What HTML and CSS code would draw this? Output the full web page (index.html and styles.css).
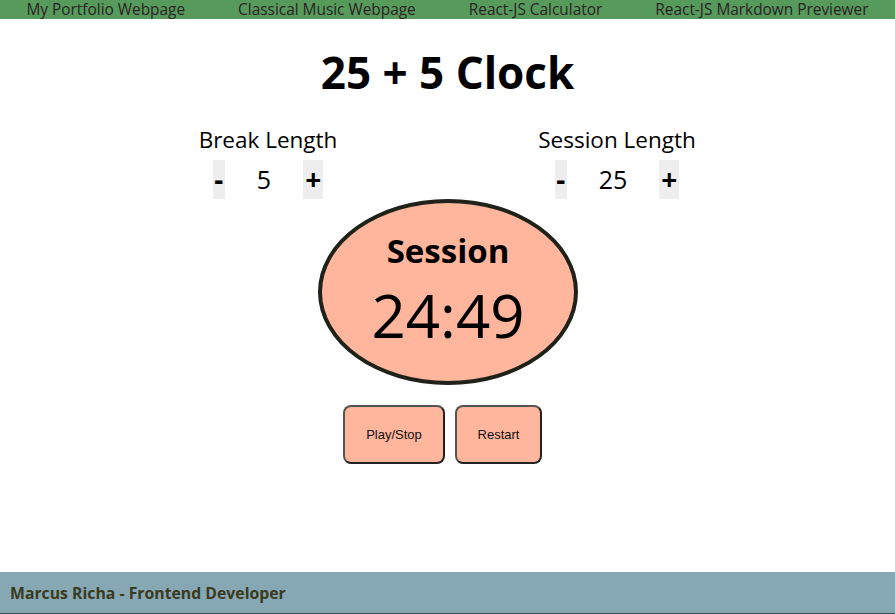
FILE: index.html
```html
<!DOCTYPE html>
<html lang="en">
<head>
<meta charset="utf-8">
<title>25 + 5 Clock</title>
<link rel="stylesheet" href="styles.css">
</head>
<body>
<nav class="topnav">
  <a class="navlink" href="#">My Portfolio Webpage</a>
  <a class="navlink" href="#">Classical Music Webpage</a>
  <a class="navlink" href="#">React-JS Calculator</a>
  <a class="navlink" href="#">React-JS Markdown Previewer</a>
</nav>
<main class="main">
  <h1 class="title">25 + 5 Clock</h1>
  <div class="lengths">
    <div class="length">
      <div class="length-label">Break Length</div>
      <div class="controls">
        <button class="adj minus">-</button>
        <span class="value">5</span>
        <button class="adj plus">+</button>
      </div>
    </div>
    <div class="length">
      <div class="length-label">Session Length</div>
      <div class="controls">
        <button class="adj minus">-</button>
        <span class="value">25</span>
        <button class="adj plus">+</button>
      </div>
    </div>
  </div>
  <div class="timer">
    <div class="timer-label">Session</div>
    <div class="timer-time">24:49</div>
  </div>
  <div class="actions">
    <button class="action play">Play/Stop</button>
    <button class="action restart">Restart</button>
  </div>
</main>
<footer class="footer">Marcus Richa - Frontend Developer</footer>
</body>
</html>
```
FILE: styles.css
```css
* { box-sizing: border-box; }
html, body { margin: 0; padding: 0; }
body {
  min-height: 100vh;
  display: flex;
  flex-direction: column;
  font-family: "Open Sans", "Noto Sans", sans-serif;
  color: #000;
  background: #fff;
}
.topnav {
  height: 19px;
  background: #569b5b;
  display: flex;
  justify-content: space-around;
  align-items: center;
}
.navlink {
  color: #2b2226;
  text-decoration: none;
  font-size: 15.4px;
  line-height: 19px;
}
.main {
  display: flex;
  flex-direction: column;
  align-items: center;
}
.title {
  margin: 26px 0 0;
  font-size: 44px;
  font-weight: 700;
  line-height: 54px;
}
.lengths {
  display: flex;
  justify-content: center;
  gap: 149px;
  margin-top: 26px;
  padding-right: 10px;
}
.length {
  width: 200px;
  display: flex;
  flex-direction: column;
  align-items: center;
}
.length-label {
  font-size: 22.5px;
  line-height: 30px;
}
.controls {
  display: flex;
  align-items: center;
  gap: 32px;
  margin-top: 5px;
}
.adj {
  border: none;
  background: #eeeeee;
  padding: 0;
  height: 39px;
  font-family: "Open Sans", sans-serif;
  font-weight: 700;
  font-size: 28px;
  color: #000;
  line-height: 39px;
}
.minus { width: 12px; }
.plus { width: 20px; }
.value {
  font-size: 25px;
  line-height: 39px;
}
.timer {
  width: 260px;
  height: 186px;
  border: 4px solid #1f2218;
  border-radius: 50%;
  background: #ffb69c;
  display: flex;
  flex-direction: column;
  align-items: center;
  margin-left: 1px;
}
.timer-label {
  margin-top: 27px;
  font-size: 33px;
  font-weight: 700;
  line-height: 42px;
}
.timer-time {
  font-size: 60px;
  line-height: 70px;
  margin-top: 8px;
}
.actions {
  display: flex;
  gap: 10px;
  margin-top: 20px;
  margin-right: 10px;
}
.action {
  height: 59px;
  background: #ffb69c;
  border: 2px solid #555;
  border-right-color: #222;
  border-bottom-color: #222;
  border-radius: 8px;
  font-family: "Liberation Sans", Arial, sans-serif;
  font-size: 13px;
  color: #111;
  padding: 0;
}
.play { width: 102px; }
.restart { width: 87px; }
.footer {
  margin-top: auto;
  height: 42px;
  background: #86a8b5;
  border-bottom: 1px solid #3c4a4e;
  padding-left: 10px;
  display: flex;
  align-items: center;
  font-weight: 700;
  font-size: 15.8px;
  color: #3b3a1c;
}
```
